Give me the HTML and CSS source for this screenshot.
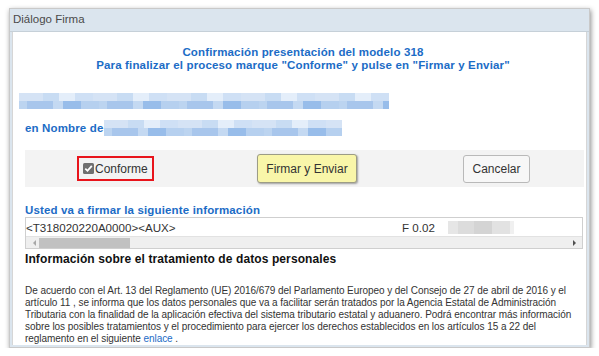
FILE: index.html
```html
<!DOCTYPE html>
<html lang="es">
<head>
<meta charset="utf-8">
<title>Diálogo Firma</title>
<link rel="stylesheet" href="styles.css">
</head>
<body>
<div class="dialog">
  <div class="title">Diálogo Firma</div>
  <div class="content">
    <div class="heading">Confirmación presentación del modelo 318<br>Para finalizar el proceso marque "Conforme" y pulse en "Firmar y Enviar"</div>
    <div class="blur blur-wide"><span class="row r1"></span><span class="row r2"></span></div>
    <div class="nombre"><span class="nombre-label">en Nombre de</span><span class="blur blur-name"><span class="row r1"></span><span class="row r2"></span></span></div>
    <div class="actions">
      <label class="conforme"><span class="check"><svg width="11" height="11" viewBox="0 0 11 11"><rect x="0" y="0" width="11" height="11" rx="1.5" fill="#6f6f6f"/><path d="M2.3 5.6 L4.5 7.8 L8.8 2.9" stroke="#fff" stroke-width="1.8" fill="none"/></svg></span>Conforme</label>
      <button class="btn btn-firmar">Firmar y Enviar</button>
      <button class="btn btn-cancel">Cancelar</button>
    </div>
    <div class="sub">Usted va a firmar la siguiente información</div>
    <div class="textbox">
      <div class="tb-line"><span class="tb-code">&lt;T318020220A0000&gt;&lt;AUX&gt;</span><span class="tb-f">F 0.02</span><span class="tb-blur"></span></div>
      <div class="scroll"><span class="arrow left"></span><span class="thumb"></span><span class="arrow right"></span></div>
    </div>
    <div class="info-title">Información sobre el tratamiento de datos personales</div>
    <p class="info">De acuerdo con el Art. 13 del Reglamento (UE) 2016/679 del Parlamento Europeo y del Consejo de 27 de abril de 2016 y el<br>artículo 11 , se informa que los datos personales que va a facilitar serán tratados por la Agencia Estatal de Administración<br>Tributaria con la finalidad de la aplicación efectiva del sistema tributario estatal y aduanero. Podrá encontrar más información<br>sobre los posibles tratamientos y el procedimiento para ejercer los derechos establecidos en los artículos 15 a 22 del<br>reglamento en el siguiente <a href="#">enlace</a> .</p>
  </div>
</div>
</body>
</html>
```
FILE: styles.css
```css
html, body {
  margin: 0;
  padding: 0;
  background: #ffffff;
}
body {
  font-family: "Liberation Sans", Arial, sans-serif;
  color: #333;
}
.dialog {
  margin: 8px 0 0 9px;
  width: 579px;
  height: 338px;
  border: 1px solid #c9c9c9;
  background: #dbe5ee;
  box-shadow: 1px 2px 5px rgba(0, 0, 0, 0.45);
  display: flex;
  flex-direction: column;
  overflow: hidden;
}
.title {
  height: 22px;
  line-height: 21px;
  padding-left: 3px;
  font-size: 11.5px;
  color: #4a4a4a;
  border-bottom: 1px solid #c6d0d8;
}
.content {
  flex: 1;
  margin: 0 2px 2px 2px;
  background: #fff;
  border-left: 1px solid #d6d6d6;
  border-right: 1px solid #d6d6d6;
  padding: 14px 5px 0 12px;
  display: flex;
  flex-direction: column;
}
.heading {
  text-align: center;
  color: #1c6cc6;
  font-weight: bold;
  font-size: 11.5px;
  letter-spacing: 0.15px;
  line-height: 13px;
}
.blur {
  display: flex;
  flex-direction: column;
}
.blur .row {
  display: block;
  height: 8px;
}
.blur-wide {
  margin: 21px 0 0 -6px;
  width: 370px;
}
.r1 {
  background: repeating-linear-gradient(90deg, #d5e3f5 0 24px, #c8dcf3 24px 40px, #e4eefa 40px 56px, #cfe0f5 56px 74px);
}
.r2 {
  background: repeating-linear-gradient(90deg, #bcd4f0 0 8px, #a8c6ec 8px 34px, #c4d9f2 34px 44px, #98bdea 44px 62px, #b6d0ef 62px 80px);
}
.nombre {
  display: flex;
  align-items: flex-end;
  margin-top: 9px;
  height: 18px;
}
.nombre-label {
  color: #1c6cc6;
  font-weight: bold;
  font-size: 11.5px;
  letter-spacing: 0.15px;
  line-height: 13px;
  padding-bottom: 1px;
}
.blur-name {
  width: 238px;
  margin-left: 1px;
}
.actions {
  margin-top: 14px;
  width: 559px;
  height: 37px;
  background: #f3f3f3;
  display: flex;
  align-items: center;
}
.conforme {
  margin-left: 52px;
  width: 73px;
  height: 21px;
  border: 2px solid #e8141b;
  display: flex;
  align-items: center;
  font-size: 12px;
  color: #333;
  background: #f3f3f3;
}
.check {
  display: inline-flex;
  margin: 0 1px 0 4px;
}
.btn {
  font-family: "Liberation Sans", Arial, sans-serif;
  font-size: 12px;
  color: #333;
  border-radius: 3px;
  padding: 0;
  height: 29px;
}
.btn-firmar {
  margin-left: 103px;
  width: 100px;
  background: #f9f6a9;
  border: 1px solid #9c9c86;
  box-shadow: 1px 1px 2px rgba(0, 0, 0, 0.35);
}
.btn-cancel {
  margin-left: 106px;
  width: 67px;
  height: 28px;
  background: #f7f7f7;
  border: 1px solid #b9b9b9;
}
.sub {
  margin-top: 17px;
  color: #1c6cc6;
  font-weight: bold;
  font-size: 11.5px;
  letter-spacing: 0.15px;
  line-height: 13px;
}
.textbox {
  width: 556px;
  border: 1px solid #cfcfcf;
  background: #fff;
}
.tb-line {
  height: 18px;
  display: flex;
  align-items: center;
  font-size: 11.6px;
  color: #333;
}
.tb-code {
  width: 376px;
}
.tb-f {
  width: 46px;
}
.tb-blur {
  width: 66px;
  height: 13px;
  background: linear-gradient(90deg, #e6e6e6 0 10px, #dcdcdc 10px 26px, #d4d4d4 26px 44px, #e2e2e2 44px 62px, #f0f0f0 62px);
}
.scroll {
  height: 11px;
  background: #efefef;
  border-top: 1px solid #e2e2e2;
  display: flex;
  align-items: center;
}
.arrow {
  width: 0;
  height: 0;
  border-top: 3px solid transparent;
  border-bottom: 3px solid transparent;
}
.arrow.left {
  margin-left: 7px;
  border-right: 3px solid #a8a8a8;
}
.arrow.right {
  margin-left: auto;
  margin-right: 6px;
  border-left: 3px solid #505050;
}
.thumb {
  margin-left: 3px;
  width: 91px;
  height: 10px;
  background: #c1c1c1;
}
.info-title {
  margin-top: 3px;
  font-weight: bold;
  font-size: 12px;
  letter-spacing: 0.1px;
  line-height: 14px;
  color: #111;
}
.info {
  margin: 19px 0 0 0;
  font-size: 10px;
  letter-spacing: -0.06px;
  line-height: 12px;
  color: #333;
  white-space: nowrap;
}
.info a {
  color: #1c6cc6;
  text-decoration: none;
}
```
